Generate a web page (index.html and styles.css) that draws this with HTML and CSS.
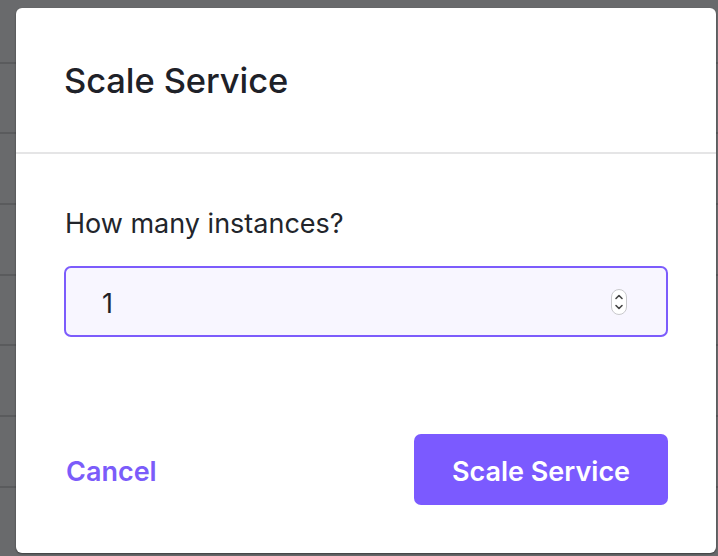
FILE: index.html
```html
<!DOCTYPE html>
<html lang="en">
<head>
<meta charset="utf-8">
<title>Scale Service</title>
<link rel="stylesheet" href="styles.css">
</head>
<body>
<div class="backdrop">
  <div class="bg-rows">
    <div class="bg-row"></div>
    <div class="bg-row"></div>
    <div class="bg-row"></div>
    <div class="bg-row"></div>
    <div class="bg-row"></div>
    <div class="bg-row"></div>
    <div class="bg-row"></div>
    <div class="bg-row"></div>
  </div>
</div>
<div class="modal" role="dialog" aria-labelledby="modal-title">
  <header class="modal-header">
    <h2 id="modal-title" class="modal-title">Scale Service</h2>
  </header>
  <div class="modal-body">
    <label class="field-label" for="instances">How many instances?</label>
    <div class="number-field">
      <input id="instances" class="number-input" type="text" value="1">
      <svg class="spinner" width="18" height="28" viewBox="0 0 18 28" aria-hidden="true">
        <rect x="1.5" y="1.5" width="15" height="25" rx="7.5" fill="#ffffff" stroke="#c9c9cc" stroke-width="1"/>
        <path d="M6 10.5 L9 7.5 L12 10.5" fill="none" stroke="#444" stroke-width="1.6" stroke-linecap="round" stroke-linejoin="round"/>
        <path d="M6 17.5 L9 20.5 L12 17.5" fill="none" stroke="#444" stroke-width="1.6" stroke-linecap="round" stroke-linejoin="round"/>
      </svg>
    </div>
  </div>
  <footer class="modal-footer">
    <button class="btn-link" type="button">Cancel</button>
    <button class="btn-primary" type="button">Scale Service</button>
  </footer>
</div>
</body>
</html>
```

FILE: styles.css
```css
* { box-sizing: border-box; }

html, body {
  margin: 0;
  height: 100%;
}

body {
  background: #696a6c;
  font-family: Inter, "Noto Sans", "Liberation Sans", sans-serif;
  overflow: hidden;
}

.backdrop {
  height: 100%;
}

.bg-rows {
  margin-top: -7px;
}

.bg-row {
  height: 70.67px;
  border-bottom: 2px solid #5a5b5d;
}

.modal {
  position: absolute;
  left: 16px;
  top: 8px;
  width: 700px;
  height: 545px;
  background: #ffffff;
  border-radius: 6px;
  box-shadow: 0 1px 2px rgba(0, 0, 0, 0.45);
  display: flex;
  flex-direction: column;
}

.modal-header {
  height: 146px;
  padding: 0 48px;
  display: flex;
  align-items: center;
  border-bottom: 2px solid #e5e5e6;
}

.modal-title {
  margin: 0;
  font-size: 34.5px;
  line-height: 40px;
  font-weight: 500;
  color: #1e2128;
  letter-spacing: -0.1px;
  margin-top: 2px;
}

.modal-body {
  padding: 54px 48px 0;
  display: flex;
  flex-direction: column;
}

.field-label {
  font-size: 27px;
  line-height: 32px;
  color: #22252b;
  margin-left: 1px;
}

.number-field {
  margin-top: 26px;
  height: 71px;
  border: 2px solid #7c5cfc;
  border-radius: 7px;
  background: #f8f6ff;
  display: flex;
  align-items: center;
  padding: 0 38px 0 36px;
}

.number-input {
  flex: 1;
  border: 0;
  outline: none;
  background: transparent;
  font-family: inherit;
  font-size: 27px;
  color: #1e2128;
  padding: 3px 0 0;
}

.spinner {
  flex: none;
  display: block;
  margin-top: 1px;
}

.modal-footer {
  margin-top: auto;
  padding: 0 48px 48px;
  display: flex;
  align-items: center;
  justify-content: space-between;
}

.btn-link {
  border: 0;
  background: none;
  padding: 3px 0 0;
  font-family: inherit;
  font-size: 27px;
  font-weight: 600;
  color: #7b5cfa;
  margin-left: 2px;
}

.btn-primary {
  width: 254px;
  height: 71px;
  border: 0;
  border-radius: 7px;
  background: #7b5aff;
  color: #ffffff;
  font-family: inherit;
  font-size: 27px;
  font-weight: 600;
  padding: 3px 0 0;
}
```
